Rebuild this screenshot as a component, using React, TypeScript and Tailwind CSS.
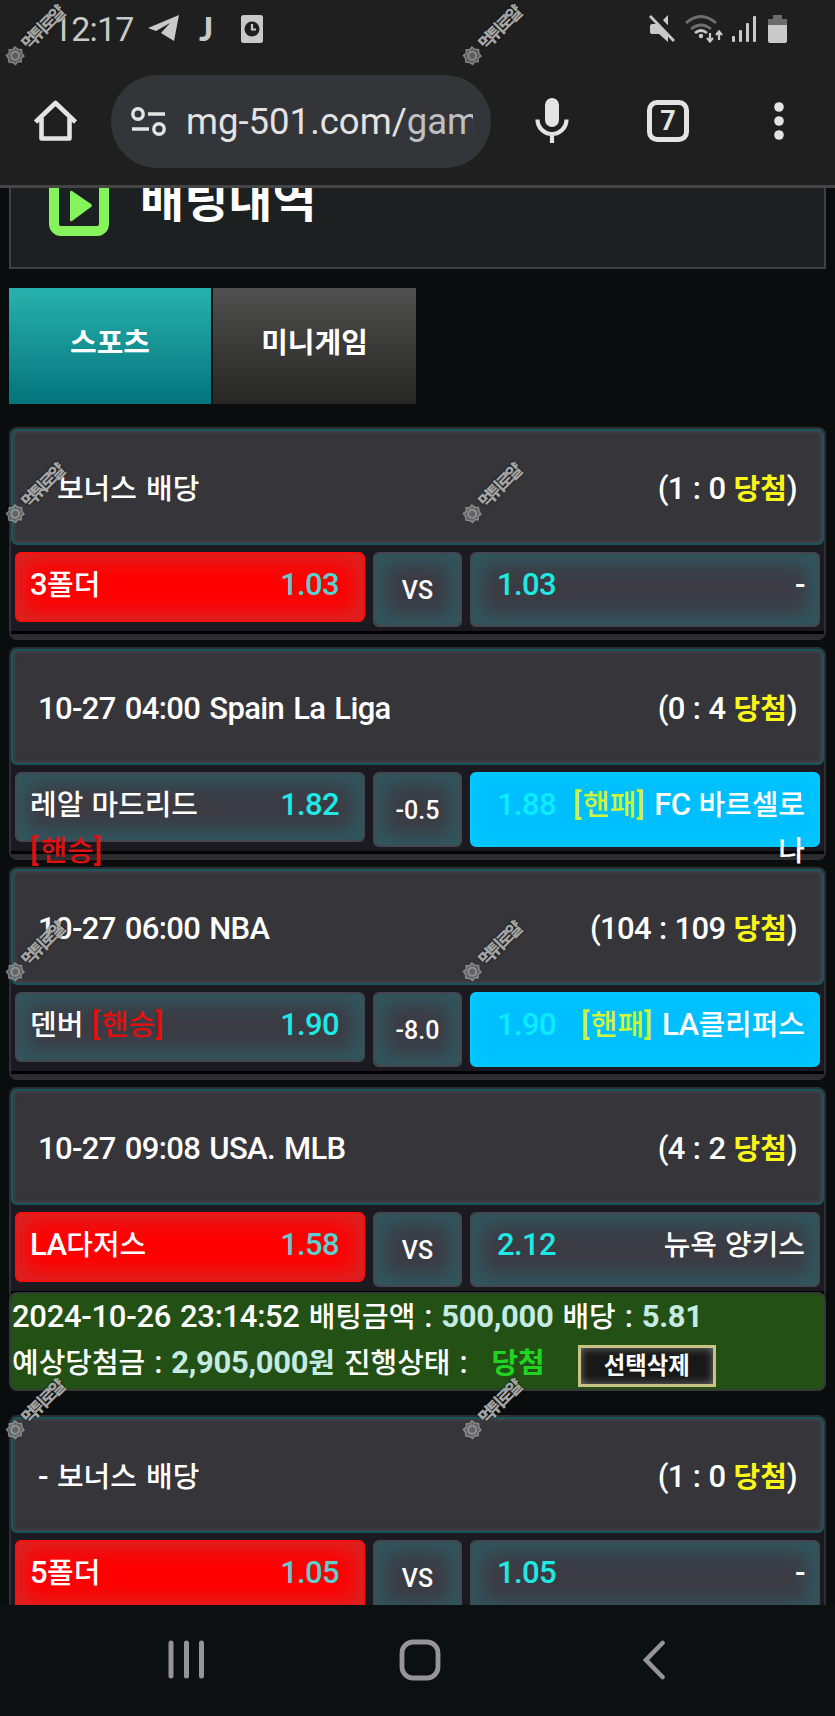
import type { ReactNode } from 'react'

type Side = { name: string; odds: string; mark?: string }

type Match = {
  title: string
  score: string
  home: Side
  away: Side
  line: string
  pick: 'home' | 'away'
}

const slip: Match[] = [
  { title: '- 보너스 배당', score: '1 : 0', home: { name: '3폴더', odds: '1.03' }, away: { name: '-', odds: '1.03' }, line: 'VS', pick: 'home' },
  { title: '10-27 04:00 Spain La Liga', score: '0 : 4', home: { name: '레알 마드리드', odds: '1.82', mark: '[핸승]' }, away: { name: 'FC 바르셀로나', odds: '1.88', mark: '[핸패]' }, line: '-0.5', pick: 'away' },
  { title: '10-27 06:00 NBA', score: '104 : 109', home: { name: '덴버', odds: '1.90', mark: '[핸승]' }, away: { name: 'LA클리퍼스', odds: '1.90', mark: '[핸패]' }, line: '-8.0', pick: 'away' },
  { title: '10-27 09:08 USA. MLB', score: '4 : 2', home: { name: 'LA다저스', odds: '1.58' }, away: { name: '뉴욕 양키스', odds: '2.12' }, line: 'VS', pick: 'home' },
]

const nextSlip: Match = {
  title: '- 보너스 배당', score: '1 : 0', home: { name: '5폴더', odds: '1.05' }, away: { name: '-', odds: '1.05' }, line: 'VS', pick: 'home',
}

const watermarkRows = [0, 1, 2, 3]

// Hangul is set slightly smaller than the latin digits around it
function Txt({ children }: { children: string }) {
  return (
    <>
      {children.split(/([가-힣]+)/).map((part, i) =>
        /[가-힣]/.test(part) ? <span key={i} className="text-[0.935em] tracking-normal">{part}</span> : part
      )}
    </>
  )
}

function StatusBar() {
  return (
    <div className="flex h-[57px] items-center pl-[53px] pr-[48px] text-[#c9c9c9]">
      <span className="w-[82px] text-[34px] leading-none tracking-[-0.8px]">12:17</span>
      <svg className="ml-[13px]" width="31" height="27" viewBox="0 0 31 27" fill="currentColor">
        <path d="M0 13 31 0 26 26 13 18l9-10L8 16z" />
      </svg>
      <span className="ml-[20px] w-[20px] font-[Lato] text-[33px] font-black leading-none">J</span>
      <svg className="ml-[22px]" width="22" height="28" viewBox="0 0 22 28">
        <rect width="22" height="28" rx="2.500" fill="currentColor" />
        <circle cx="11" cy="14" r="7.500" fill="#1f1f1f" />
        <path d="M11 9v5.500h4" fill="none" stroke="currentColor" strokeWidth="2.200" />
      </svg>
      <svg className="ml-auto" width="27" height="28" viewBox="0 0 27 28">
        <path d="M19 0v27L10 19H3a2 2 0 0 1-2-2v-6a2 2 0 0 1 2-2h7z" fill="currentColor" />
        <path d="M3-2 27 23" stroke="#1f1f1f" strokeWidth="6" />
        <path d="M1 1 25 26" stroke="currentColor" strokeWidth="2.800" />
      </svg>
      <svg className="ml-[9px]" width="38" height="28" viewBox="0 0 38 28" fill="none" strokeWidth="2.800">
        <path d="M1 8q15-13 30 0M6 14q10-8 20 0" stroke="#6e6e6e" />
        <path d="M10 18q6-5 12 0" stroke="currentColor" />
        <circle cx="16" cy="21" r="2.200" fill="currentColor" />
        <path d="M25 18v8m-3-3 3 3.500 3-3.500M34 25v-8m-3 3 3-3.500 3 3.500" stroke="currentColor" strokeWidth="2.200" />
      </svg>
      <svg className="ml-[9px]" width="25" height="28" viewBox="0 0 25 28" fill="currentColor">
        <rect x="0" y="21" width="3" height="6" rx="1" />
        <rect x="7" y="15" width="3" height="12" rx="1" />
        <rect x="14" y="8" width="3" height="19" rx="1" />
        <rect x="21" y="1" width="3" height="26" rx="1" />
      </svg>
      <svg className="ml-[11px]" width="19" height="28" viewBox="0 0 19 28">
        <path d="M5 0h9v4h5v6H0V4h5z" fill="#6b6b6b" />
        <path d="M0 10h19v16a2 2 0 0 1-2 2H2a2 2 0 0 1-2-2z" fill="currentColor" />
      </svg>
    </div>
  )
}

function AddressBar() {
  return (
    <div className="flex h-[128px] items-center text-[#e3e3e3]">
      <svg className="ml-[34px]" width="43" height="43" viewBox="0 0 43 43" fill="none" stroke="currentColor" strokeWidth="4.600" strokeLinejoin="round">
        <path d="M1.500 22 21.500 3l20 19M7.500 18v20.500h28V18" />
      </svg>
      <div className="ml-[34px] flex h-[93px] w-[380px] items-center rounded-full bg-[#343539] pl-[20px]">
        <svg width="35" height="29" viewBox="0 0 35 29" fill="none" stroke="currentColor" strokeWidth="3.400">
          <circle cx="7" cy="7" r="5.200" />
          <circle cx="28" cy="22" r="5.200" />
          <path d="M17 7h17M1 22h17" />
        </svg>
        <div className="ml-[20px] w-[287px] overflow-hidden whitespace-nowrap pt-[2px] text-[36.500px] leading-[48px]">
          mg-501.com/<span className="text-[#bdc1c6]">game</span>
        </div>
      </div>
      <svg className="ml-[44px]" width="34" height="46" viewBox="0 0 34 46" fill="none">
        <rect x="10" y="0" width="14" height="29" rx="7" fill="currentColor" />
        <path d="M2.500 21.500a14.500 14.500 0 0 0 29 0M17 36v9" stroke="currentColor" strokeWidth="4.200" />
      </svg>
      <div className="ml-[78px] flex h-[42px] w-[42px] items-center justify-center rounded-[10px] border-5 border-[#e3e3e3] text-[27px] font-bold leading-none">7</div>
      <svg className="ml-[85px]" width="10" height="38" viewBox="0 0 10 38" fill="currentColor">
        <circle cx="5" cy="5" r="4.800" />
        <circle cx="5" cy="19" r="4.800" />
        <circle cx="5" cy="33" r="4.800" />
      </svg>
    </div>
  )
}

const idle = 'border-[#464650] bg-[#3c3b44] shadow-[inset_0_0_20px_10px_#30585f]'
const red = 'border-[#f51010] bg-[#ff0000] shadow-[inset_0_0_20px_8px_#d92424]'
const blue = 'border-[#08c6ff] bg-[#00bfff] shadow-[inset_0_0_16px_6px_#02c7ff]'

function Cell({ className, children }: { className: string; children: ReactNode }) {
  return <div className={`shrink-0 rounded-[6px] border-2 ${className}`}>{children}</div>
}

function MatchCard({ match }: { match: Match }) {
  const { title, score, home, away, line, pick } = match
  return (
    <div className="h-[213px] rounded-[8px] border-2 border-[#2f2f32] bg-[#1a1a20] tracking-[-0.65px]">
      <div className="flex h-[116px] items-center justify-between rounded-[6px] border-2 border-[#17565d] bg-[#35353a] pl-[25px] pr-[25px] pt-[4px] shadow-[inset_0_0_5px_#514d54]">
        <span className="[word-spacing:2px]"><Txt>{title}</Txt></span>
        <span>
          ({score} <b className="text-[#fbf61a]"><Txt>당첨</Txt></b>)
        </span>
      </div>
      <div className="mt-[7px] flex h-[82px] items-start gap-[8px] border-b-[3px] border-black pl-[4px]">
        <Cell className={`h-[70px] w-[350px] ${pick === 'home' ? red : idle}`}>
          <div className="flex justify-between pl-[13px] pr-[24px] pt-[8px] leading-[46px]">
            <span className="w-[190px]">
              <Txt>{home.name}</Txt> {home.mark && <span className="whitespace-nowrap tracking-[2px] text-[#e01010]"><Txt>{home.mark}</Txt></span>}
            </span>
            <span className={pick === 'home' ? 'text-[#5ccfcf]' : 'text-[#1fe9e5]'}>{home.odds}</span>
          </div>
        </Cell>
        <Cell className={`flex h-[75px] w-[89px] items-center justify-center pt-[2px] text-[25px] tracking-normal ${idle}`}>{line}</Cell>
        <Cell className={`h-[75px] w-[350px] ${pick === 'away' ? blue : idle}`}>
          <div className="flex justify-between pl-[25px] pr-[13px] pt-[8px] leading-[46px]">
            <span className={pick === 'away' ? 'text-[#0cecff]' : 'text-[#1fe9e5]'}>{away.odds}</span>
            <span className="w-[240px] break-all text-right">
              {away.mark && <span className="tracking-[1.5px] text-[#d0f43a]"><Txt>{away.mark}</Txt></span>} <Txt>{away.name}</Txt>
            </span>
          </div>
        </Cell>
      </div>
      <div className="h-[4px] bg-[#2b2b2d]" />
    </div>
  )
}

function Summary() {
  return (
    <div className="relative -mt-[8px] h-[99px] rounded-[8px] border-2 border-[#353a35] bg-[#225015] leading-[46px] tracking-[-0.3px] [word-spacing:1.6px]">
      <div className="pl-[1px]">
        <Txt>2024-10-26 23:14:52 배팅금액 : </Txt>
        <b className="text-[#c5ebe3]">500,000</b>
        <Txt> 배당 : </Txt>
        <b className="text-[#c5ebe3]">5.81</b>
      </div>
      <div className="flex pl-[1px]">
        <span className="whitespace-pre">
          <Txt>예상당첨금 : </Txt>
          <b className="text-[#c5ebe3]"><Txt>2,905,000원</Txt></b>
          <Txt> 진행상태 :</Txt>
        </span>
        <b className="ml-[24px] text-[#21d421]"><Txt>당첨</Txt></b>
        <button className="ml-[33px] mt-[5px] flex h-[42px] w-[138px] items-center justify-center border-[3px] border-[#c9c285] bg-[#191919] pt-[2px] text-[25px] font-bold leading-none shadow-[inset_0_0_9px_#777]">
          <Txt>선택삭제</Txt>
        </button>
      </div>
    </div>
  )
}

function Watermark() {
  return (
    <div className="flex h-[76px] w-[76px] -rotate-45 items-center justify-start gap-[3px] text-[#c2c2c2]/85">
      <svg className="shrink-0" width="20" height="20" viewBox="0 0 20 20" fill="none" stroke="currentColor" opacity="0.7">
        <path d="M10 1.500 12.500 4l3.500-.5.500 3.500 2.500 3-2.500 3-.5 3.500-3.500-.5L10 18.500 7.500 16 4 16.500 3.500 13 1 10l2.500-3L4 3.500l3.500.5z" fill="#777" strokeWidth="1.400" />
        <circle cx="10" cy="10" r="4" strokeWidth="2" />
      </svg>
      <span className="whitespace-nowrap text-[17px] font-black leading-none tracking-[-2.700px] [text-shadow:0_0_2px_#000]">먹튀로얄</span>
    </div>
  )
}

function NavBar() {
  return (
    <div className="flex h-[111px] items-center bg-[#0c1011] pb-[2px] text-[#959595]">
      <svg className="ml-[168px]" width="37" height="39" viewBox="0 0 37 39" fill="none" stroke="currentColor" strokeWidth="5" strokeLinecap="round">
        <path d="M3 3v33M18.500 3v33M33.500 3v33" />
      </svg>
      <svg className="ml-[194px]" width="42" height="42" viewBox="0 0 42 42" fill="none" stroke="currentColor" strokeWidth="4.800">
        <rect x="3" y="3" width="36" height="36" rx="11" />
      </svg>
      <svg className="ml-[201px]" width="24" height="40" viewBox="0 0 24 40" fill="none" stroke="currentColor" strokeWidth="4.600" strokeLinecap="round">
        <path d="M20.500 3 4 20l16.500 17" />
      </svg>
    </div>
  )
}

export default function App() {
  return (
    <div className="relative h-[1716px] w-[835px] overflow-hidden bg-[#0a0d0e] font-[Roboto,'Noto_Sans_CJK_KR',sans-serif] text-white">
      <header className="h-[188px] border-b-[3px] border-[#454545] bg-[#1f1f1f]">
        <StatusBar />
        <AddressBar />
      </header>

      <main className="h-[1417px] overflow-hidden px-[9px] text-[31px] font-medium [word-spacing:1px]">
        <div className="flex h-[81px] items-start overflow-hidden border-x-2 border-b-2 border-[#3f4141] bg-[#1d2021] pl-[38px]">
          <svg className="-mt-[12px]" width="60" height="60" viewBox="0 0 60 60">
            <rect x="5" y="5" width="50" height="50" rx="7" fill="none" stroke="#84f35c" strokeWidth="10" />
            <path d="M21 16q0-2 2-1l19 13q2 1.500 0 3L23 45q-2 1-2-1z" fill="#84f35c" />
          </svg>
          <h1 className="-mt-[22px] ml-[31px] text-[48px] font-bold leading-[70px]">배팅내역</h1>
        </div>

        <div className="mt-[19px] flex h-[116px] gap-[2px] font-bold">
          <div className="flex w-[202px] items-center justify-center bg-linear-to-b from-[#27b2ae] to-[#02747c] pb-[4px]"><Txt>스포츠</Txt></div>
          <div className="flex w-[203px] items-center justify-center bg-linear-to-b from-[#505050] to-[#262624] pb-[4px]"><Txt>미니게임</Txt></div>
        </div>

        <div className="mt-[23px] flex flex-col gap-[7px]">
          {slip.map((match) => (
            <MatchCard key={match.title} match={match} />
          ))}
        </div>
        <Summary />
        <div className="mt-[24px]">
          <MatchCard match={nextSlip} />
        </div>
      </main>

      <NavBar />

      <div className="pointer-events-none absolute left-[-3px] top-[-2px] flex flex-col gap-[382px]">
        {watermarkRows.map((row) => (
          <div key={row} className="flex gap-[381px]">
            <Watermark />
            <Watermark />
          </div>
        ))}
      </div>
    </div>
  )
}
